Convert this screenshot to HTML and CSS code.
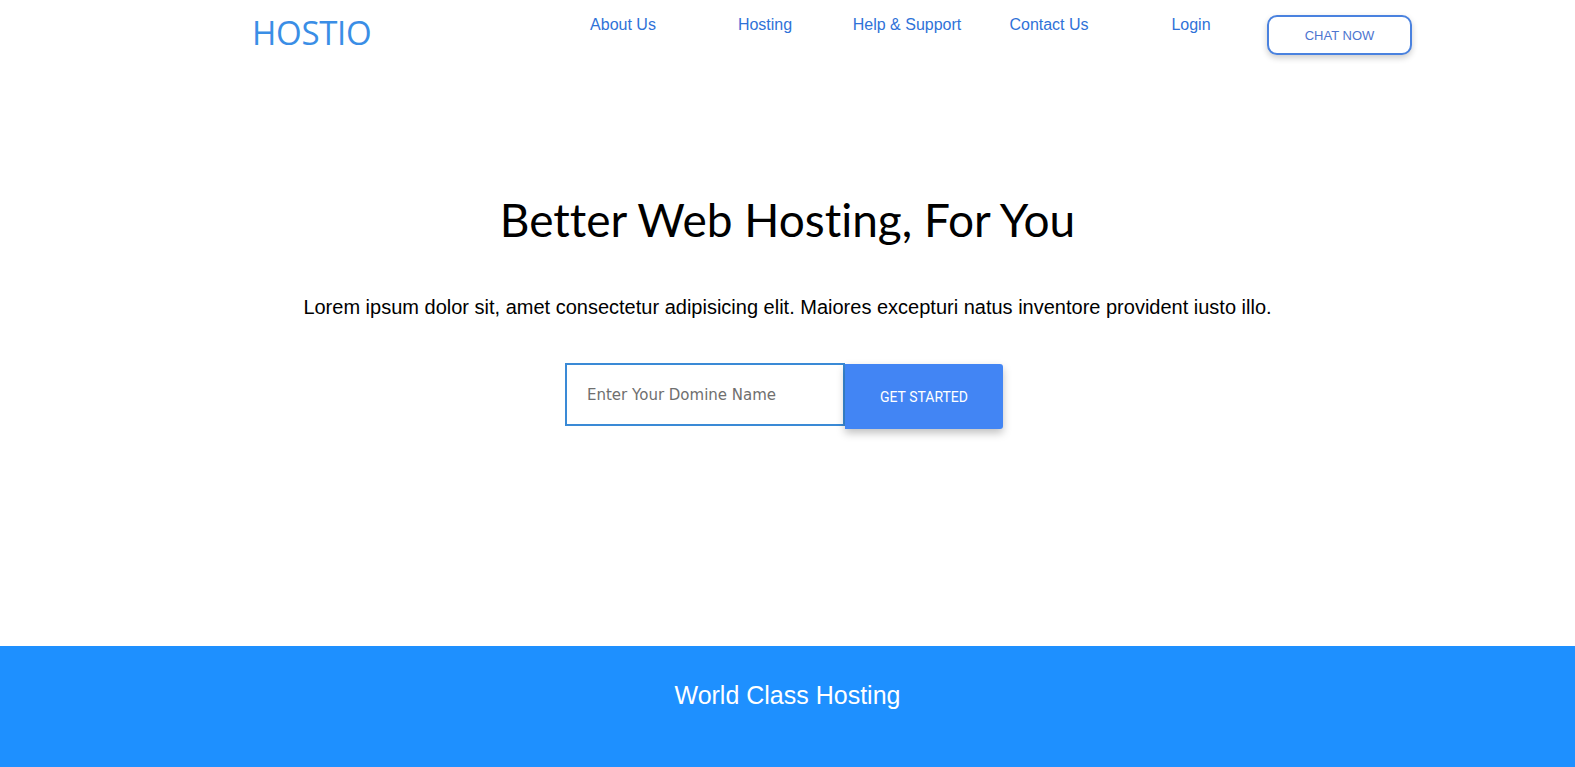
FILE: index.html
```html
<!DOCTYPE html>
<html lang="en">
<head>
<meta charset="utf-8">
<title>Hostio</title>
<link rel="stylesheet" href="styles.css">
</head>
<body>
<header class="header">
  <div class="logo">HOSTIO</div>
  <nav class="nav">
    <a class="nav-link" href="#">About Us</a>
    <a class="nav-link" href="#">Hosting</a>
    <a class="nav-link" href="#">Help &amp; Support</a>
    <a class="nav-link" href="#">Contact Us</a>
    <a class="nav-link" href="#">Login</a>
  </nav>
  <button class="chat-btn">CHAT NOW</button>
</header>
<section class="hero">
  <h1 class="hero-title">Better Web Hosting, For You</h1>
  <p class="hero-text">Lorem ipsum dolor sit, amet consectetur adipisicing elit. Maiores excepturi natus inventore provident iusto illo.</p>
  <form class="domain-form">
    <input class="domain-input" type="text" placeholder="Enter Your Domine Name">
    <button class="start-btn" type="button">GET STARTED</button>
  </form>
</section>
<section class="band">
  <h2 class="band-title">World Class Hosting</h2>
</section>
</body>
</html>
```
FILE: styles.css
```css
* { box-sizing: border-box; }
html, body { margin: 0; padding: 0; background: #fff; }
body { font-family: "Liberation Sans", Arial, sans-serif; overflow: hidden; }

.header {
  display: flex;
  align-items: flex-start;
  height: 150px;
  padding-left: 252px;
}
.logo {
  font-family: "Open Sans", sans-serif;
  font-size: 33px;
  color: #3a8ee6;
  width: 300px;
  margin-top: 11px;
  line-height: 44px;
  letter-spacing: -0.3px;
}
.nav { display: flex; margin-top: 15px; }
.nav-link {
  width: 142px;
  text-align: center;
  color: #2f72d8;
  text-decoration: none;
  font-size: 16px;
  line-height: 20px;
}
.chat-btn {
  margin-left: 5px;
  margin-top: 15px;
  width: 145px;
  height: 40px;
  background: #fff;
  border: 2px solid #4a82df;
  border-radius: 10px;
  color: #4d75cf;
  font-family: "Liberation Sans", Arial, sans-serif;
  font-size: 13px;
  box-shadow: 0 3px 6px rgba(0,0,0,0.2);
  padding: 0;
}

.hero {
  height: 496px;
  text-align: center;
  padding-top: 44px;
}
.hero-title {
  margin: 0;
  font-family: "Lato", sans-serif;
  font-weight: 400;
  font-size: 46px;
  line-height: 52px;
  color: #000;
  font-variant-ligatures: none;
}
.hero-text {
  margin: 49px 0 0;
  font-size: 20px;
  line-height: 24px;
  color: #000;
}
.domain-form {
  display: flex;
  justify-content: center;
  margin-top: 44px;
  padding-right: 7px;
}
.domain-input {
  width: 280px;
  height: 63px;
  border: 2px solid #3a8ad6;
  padding: 0 0 0 20px;
  font-family: "DejaVu Sans", sans-serif;
  font-size: 15px;
  outline: none;
}
.domain-input::placeholder { color: #6f6f6f; }
.start-btn {
  width: 158px;
  height: 65px;
  margin-top: 1px;
  background: #4285f4;
  color: #fff;
  border: none;
  border-radius: 0 3px 3px 0;
  font-family: Roboto, sans-serif;
  font-size: 14px;
  box-shadow: 0 4px 8px rgba(0,0,0,0.25);
}

.band {
  background: #1e90ff;
  height: 121px;
  text-align: center;
  padding-top: 35px;
}
.band-title {
  margin: 0;
  font-weight: 400;
  font-size: 25px;
  line-height: 28px;
  color: #fff;
}
```
